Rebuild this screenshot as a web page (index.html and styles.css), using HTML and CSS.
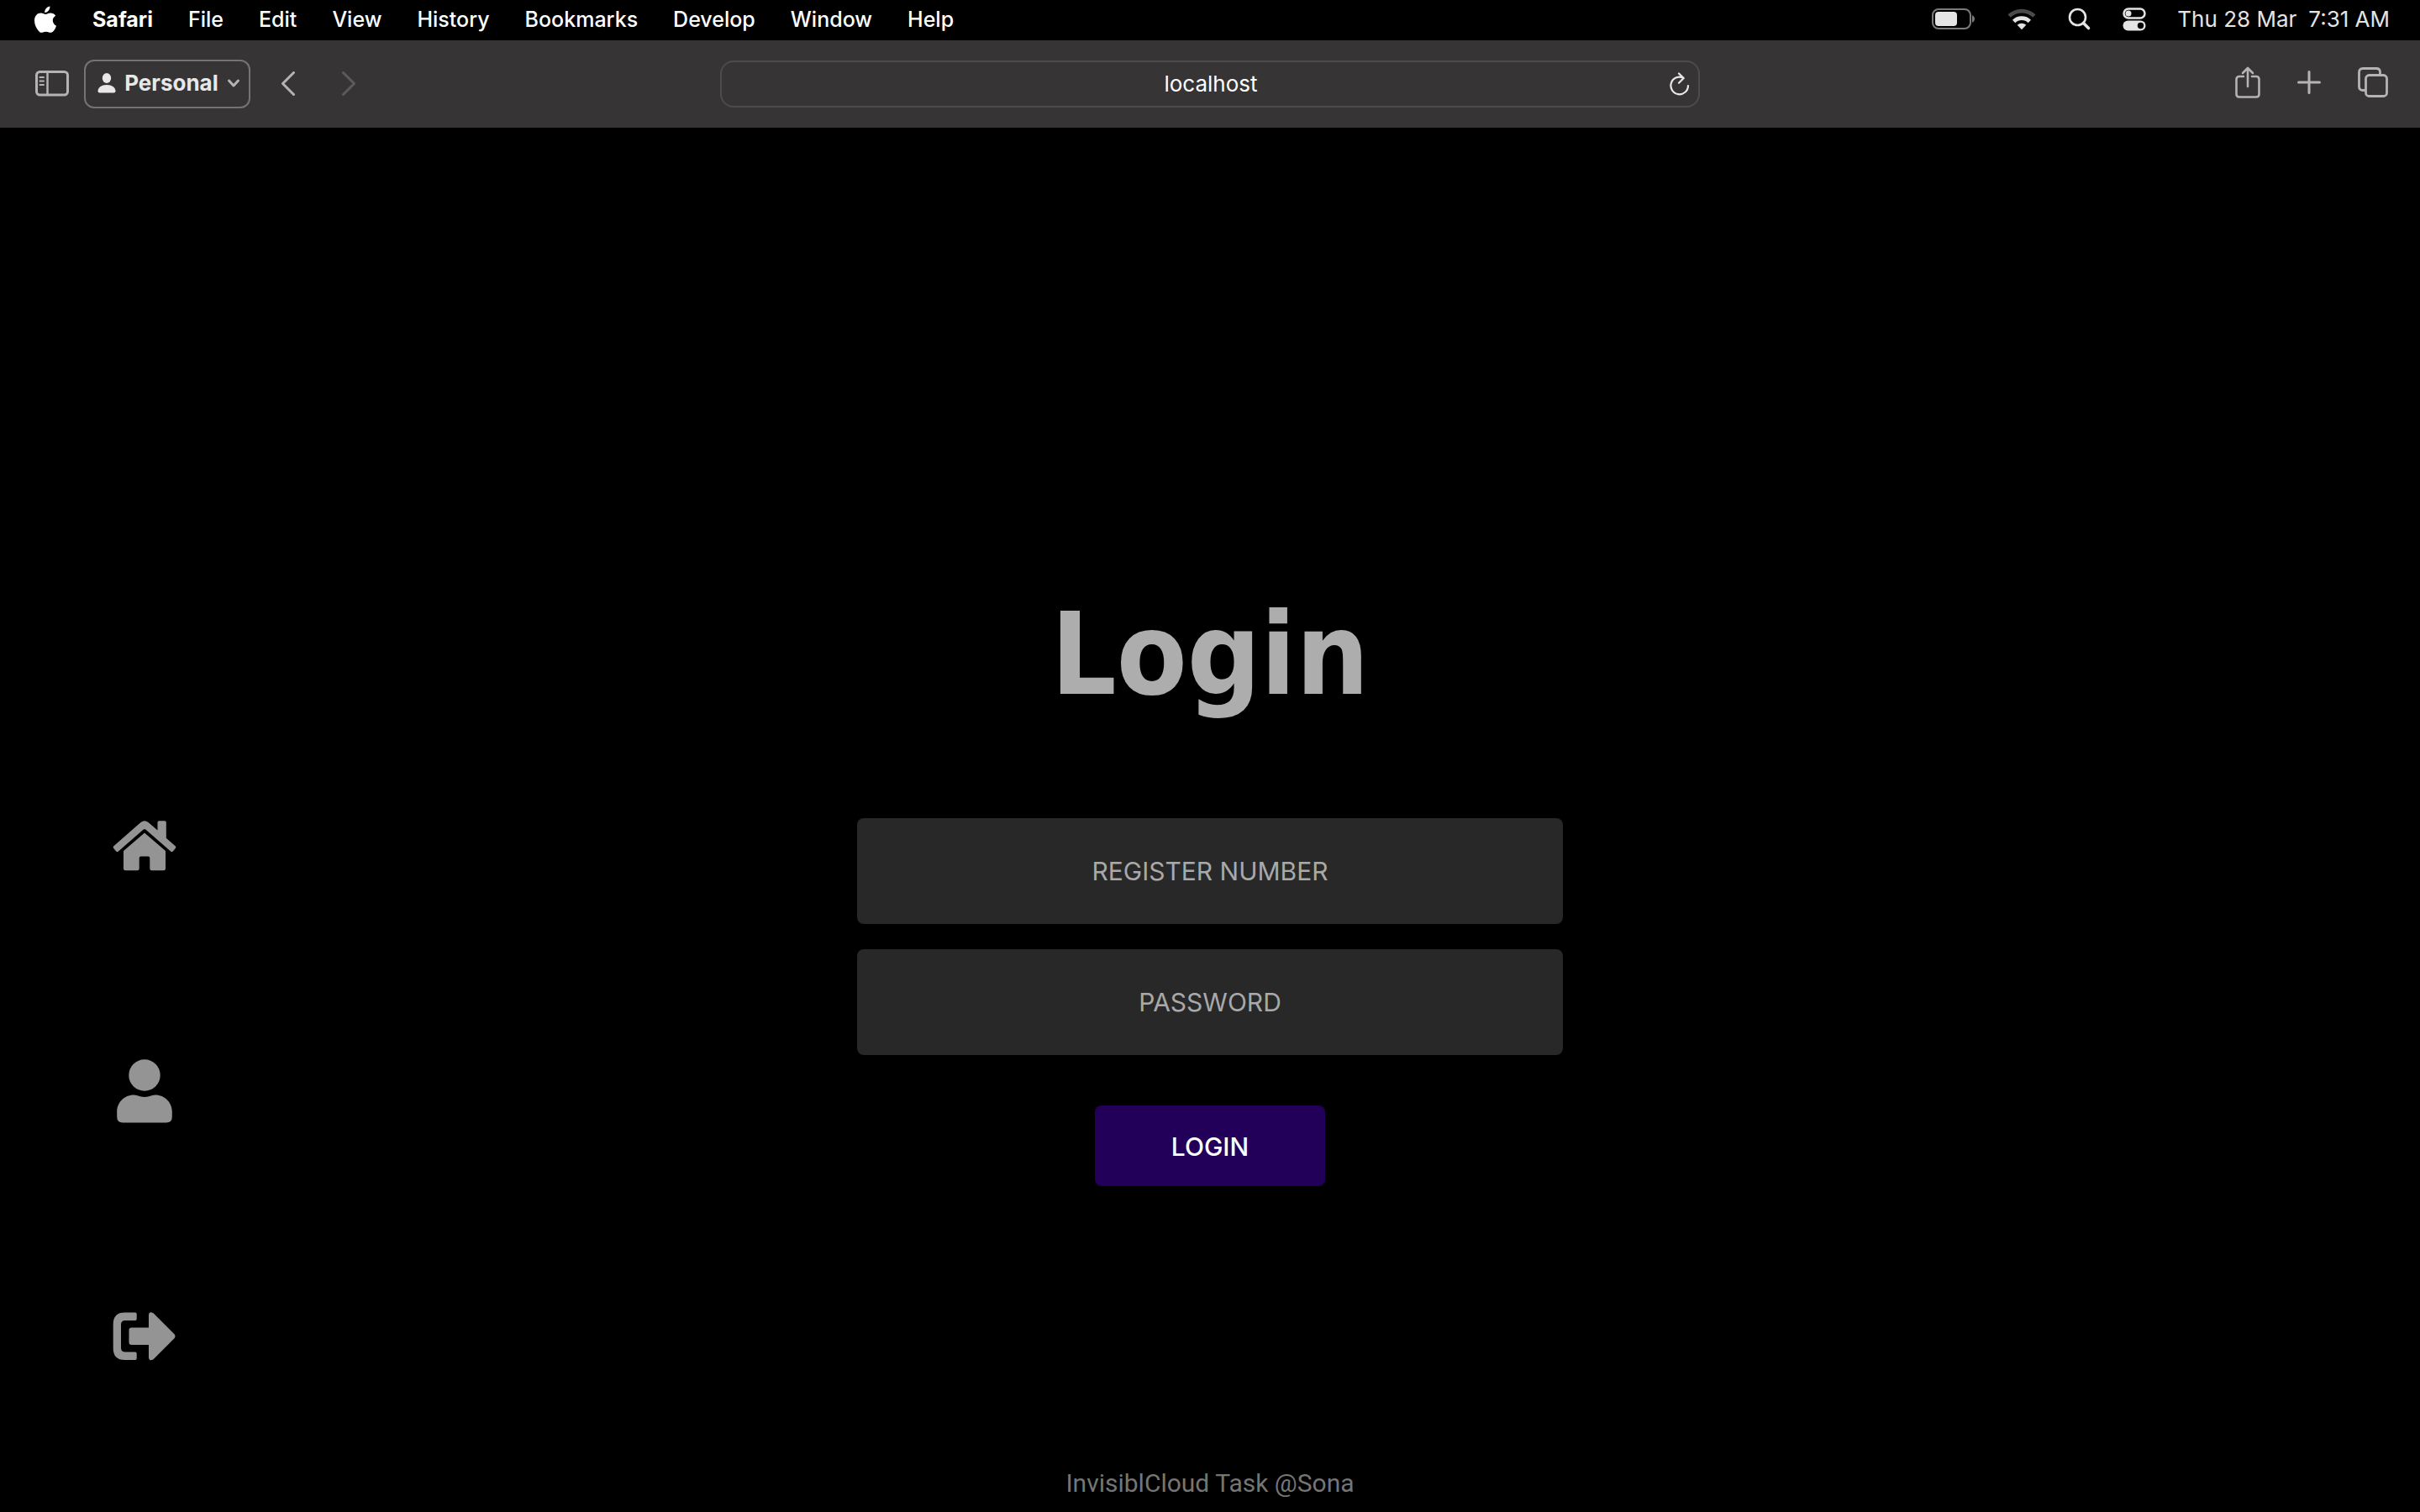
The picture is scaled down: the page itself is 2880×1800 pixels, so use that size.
FILE: index.html
```html
<!DOCTYPE html>
<html lang="en">
<head>
<meta charset="utf-8">
<meta name="viewport" content="width=device-width, initial-scale=1">
<title>Login</title>
<link rel="stylesheet" href="styles.css">
</head>
<body>
<header>
  <div class="menubar">
    <nav class="menus" aria-label="Menu bar">
      <button class="apple" aria-label="System menu">
        <svg width="28" height="32" viewBox="0 0 28 32" fill="currentColor"><path d="M19.4 0.6C19.6 2.8 18.7 4.7 17.5 6C16.3 7.300 14.600 8.100 13.200 8C13 6 14 4 15.200 2.800C16.300 1.600 18 0.700 19.400 0.600ZM14.300 10C15.800 10 17.500 8.600 20 8.600C22.500 8.600 24.900 9.800 26.200 11.800C23.900 13.200 22.700 15.100 22.800 17.600C22.900 20.600 24.700 22.700 27 23.700C26.400 25.800 25.200 28 23.800 29.700C22.700 31 21.600 31.800 20 31.800C18.200 31.800 17.100 30.700 14.600 30.700C12.100 30.700 11.100 31.800 9.300 31.800C7.900 31.800 6.700 30.800 5.400 29.200C2.800 26 1 21.800 1 17.600C1 12 4.500 8.600 8.600 8.600C11.100 8.600 12.900 10 14.300 10Z"/></svg>
      </button>
      <button class="app-name">Safari</button>
      <button>File</button>
      <button>Edit</button>
      <button>View</button>
      <button>History</button>
      <button>Bookmarks</button>
      <button>Develop</button>
      <button>Window</button>
      <button>Help</button>
    </nav>
    <div class="status">
      <svg width="52" height="26" viewBox="0 0 52 26"><rect x="1" y="1" width="45" height="23" rx="7" fill="none" stroke="#7b7b7b" stroke-width="2"/><rect x="4" y="4" width="26" height="17" rx="4" fill="#e4e4e4"/><path d="M48 8C52 10 52 15 48 17Z" fill="#7b7b7b"/></svg>
      <svg width="36" height="26" viewBox="0 0 36 26"><path d="M1.500 9.500A23.500 23.500 0 0 1 34.500 9.500L31.200 12.800A19 19 0 0 0 4.800 12.800Z" transform="translate(0 -2)" fill="#4a4a4a"/><path d="M7 13.800A15.700 15.700 0 0 1 29 13.800L25.700 17.200A11 11 0 0 0 10.300 17.200Z" fill="#e4e4e4"/><path d="M12.700 19.800A7.700 7.700 0 0 1 23.300 19.800L18 25.200Z" fill="#e4e4e4"/></svg>
      <svg width="28" height="28" viewBox="0 0 28 28" fill="none" stroke="#e4e4e4"><circle cx="11.500" cy="11.500" r="9.500" stroke-width="2.600"/><path d="M18.500 18.500L24.500 24.500" stroke-width="3.600" stroke-linecap="round"/></svg>
      <svg width="28" height="28" viewBox="0 0 28 28"><rect x="1.500" y="1.500" width="25" height="11" rx="5.500" fill="none" stroke="#e4e4e4" stroke-width="2.500"/><circle cx="7" cy="7" r="3.500" fill="#e4e4e4"/><rect x="0.500" y="15.500" width="27" height="12" rx="6" fill="#e4e4e4"/><circle cx="21.500" cy="21.500" r="3.700" fill="#000"/></svg>
      <time class="clock"><span>Thu 28 Mar</span><span>7:31 AM</span></time>
    </div>
  </div>

  <div class="toolbar">
    <div class="tools">
      <button aria-label="Show sidebar">
        <svg width="40" height="32" viewBox="0 0 40 32" fill="none" stroke="currentColor"><rect x="1.500" y="1.500" width="37" height="27.500" rx="4" stroke-width="3"/><path d="M14.500 2V29" stroke-width="2.500"/><path d="M5.500 8H10M5.500 12.500H10M5.500 17H10" stroke-width="2" stroke-linecap="round"/></svg>
      </button>
      <button class="profile">
        <svg width="22" height="24" viewBox="0 0 22 24" fill="currentColor"><ellipse cx="11" cy="6" rx="5.200" ry="6"/><path d="M0.500 21.500C0.500 17 5 14 11 14S21.500 17 21.500 21.500Q21.500 23.500 19.500 23.500H2.500Q0.500 23.500 0.500 21.500Z"/></svg>
        <span>Personal</span>
        <svg class="dim" width="16" height="12" viewBox="0 0 16 12" fill="none" stroke="currentColor" stroke-width="3" stroke-linecap="round" stroke-linejoin="round"><path d="M2.500 3L8 9L13.500 3"/></svg>
      </button>
      <button class="back" aria-label="Back">
        <svg width="18" height="30" viewBox="0 0 18 30" fill="none" stroke="currentColor" stroke-width="3" stroke-linecap="round" stroke-linejoin="round"><path d="M15.500 1.500L2.500 14.500L15.500 27.500"/></svg>
      </button>
      <button class="forward" aria-label="Forward" disabled>
        <svg width="18" height="30" viewBox="0 0 18 30" fill="none" stroke="currentColor" stroke-width="3" stroke-linecap="round" stroke-linejoin="round"><path d="M2.500 1.500L15.500 14.500L2.500 27.500"/></svg>
      </button>
    </div>
    <div class="address">
      <input type="text" value="localhost" aria-label="Address">
      <button aria-label="Reload">
        <svg width="24" height="28" viewBox="0 0 24 28" fill="none" stroke="currentColor" stroke-width="2.200" stroke-linecap="round" stroke-linejoin="round"><path d="M22 16A10.300 10.300 0 1 1 16 6.600M11 1.500L16.700 7L11 12.700"/></svg>
      </button>
    </div>
    <div class="actions">
      <button aria-label="Share">
        <svg width="30" height="38" viewBox="0 0 30 38" fill="none" stroke="currentColor" stroke-width="2.600" stroke-linecap="round" stroke-linejoin="round"><path d="M10 12H5Q1.500 12 1.500 15.500V33Q1.500 36.500 5 36.500H25Q28.500 36.500 28.500 33V15.500Q28.500 12 25 12H20M15 24V2M9 8L15 2L21 8"/></svg>
      </button>
      <button aria-label="New tab">
        <svg width="28" height="28" viewBox="0 0 28 28" fill="none" stroke="currentColor" stroke-width="3" stroke-linecap="round"><path d="M14 1.500V26.500M1.500 14H26.500"/></svg>
      </button>
      <button aria-label="Tab overview">
        <svg width="36" height="36" viewBox="0 0 36 36" fill="none" stroke="currentColor" stroke-width="2.800"><rect x="9.500" y="9.500" width="25" height="25" rx="4"/><path d="M9 27.500H6Q1.500 27.500 1.500 23V6Q1.500 1.500 6 1.500H22Q26.500 1.500 26.500 6V9"/></svg>
      </button>
    </div>
  </div>
</header>

<main>
  <nav class="side" aria-label="Pages">
    <a href="#home" aria-label="Home">
      <svg width="76" height="76" viewBox="0 0 76 76" fill="currentColor"><path d="M1.300 38.200L33.500 10Q38 6.500 42.500 10L53.500 19.600V10Q53.500 8.200 55.300 8.200H62Q63.800 8.200 63.800 10V28.700L74.700 38.200Q76 39.500 74.900 40.800L71.800 44.400Q70.500 45.700 69.100 44.500L39.300 18.500Q38 17.500 36.700 18.500L6.900 44.500Q5.500 45.700 4.200 44.400L1.100 40.800Q0 39.500 1.300 38.200Z"/><path d="M38 22.500L63 44V65Q63 67.200 60.800 67.200H46.500Q44.300 67.200 44.300 65V52.500Q44.300 50.500 42.300 50.500H33.700Q31.700 50.500 31.700 52.500V65Q31.700 67.200 29.500 67.200H15.200Q13 67.200 13 65V44Z"/></svg>
    </a>
    <a href="#profile" aria-label="Profile">
      <svg width="76" height="76" viewBox="0 0 76 76" fill="currentColor"><circle cx="38" cy="19" r="18.700"/><path d="M25 42.500Q28 42.500 29.500 43.300Q38 46.700 46.500 43.300Q48 42.500 51 42.500C62 42.500 70.800 51.500 70.800 62.500V68.500Q70.800 75.500 63.800 75.500H12.200Q5.200 75.500 5.200 68.500V62.500C5.200 51.500 14 42.500 25 42.500Z"/></svg>
    </a>
    <a href="#logout" aria-label="Log out">
      <svg width="76" height="76" viewBox="0 0 76 76" fill="currentColor"><path d="M27 9.500Q28.700 9.500 28.700 11.200V17.300Q28.700 19 27 19H15Q10 19 10 24V51.500Q10 56.500 15 56.500H27Q28.700 56.500 28.700 58.200V64.300Q28.700 66 27 66H14.500Q0.700 66 0.700 52.200V23.300Q0.700 9.500 14.500 9.500Z"/><path d="M48.500 10.300L73.500 35.300Q75.500 37.700 73.500 40.200L48.500 65.200Q43 68 43 62.500V48H22.500Q19.500 48 19.500 45V30.500Q19.500 27.500 22.500 27.500H43V13Q43 7.500 48.500 10.300Z"/></svg>
    </a>
  </nav>
  <form class="login">
    <h1>Login</h1>
    <input type="text" placeholder="REGISTER NUMBER" aria-label="Register number">
    <input type="password" placeholder="PASSWORD" aria-label="Password">
    <button type="submit">LOGIN</button>
  </form>
</main>
<footer>InvisiblCloud Task @Sona</footer>
</body>
</html>
```
FILE: styles.css
```css
* {
  box-sizing: border-box;
}

body {
  margin: 0;
  min-height: 100vh;
  display: flex;
  flex-direction: column;
  background: #000;
  color: #fff;
  font: 26px/32px Inter, "Liberation Sans", sans-serif;
}

button,
input {
  margin: 0;
  padding: 0;
  border: 0;
  background: none;
  color: inherit;
  font: inherit;
}

svg {
  display: block;
}

/* system menu bar */
.menubar {
  display: flex;
  justify-content: space-between;
  align-items: center;
  height: 48px;
  padding: 0 36px 2px 40px;
}

.menus {
  display: flex;
  align-items: center;
  gap: 42px;
  font-size: 25px;
  font-weight: 500;
}

.menus .app-name {
  font-weight: 700;
}

.status {
  display: flex;
  align-items: center;
  gap: 37px;
  color: #e4e4e4;
}

.clock {
  display: flex;
  gap: 14px;
}

/* browser toolbar */
.toolbar {
  display: grid;
  grid-template-columns: 1fr minmax(0, 1166px) 1fr;
  align-items: center;
  height: 104px;
  padding: 0 38px;
  background: #363435;
  color: #b5b3b4;
}

.tools,
.actions {
  display: flex;
  align-items: center;
}

.tools {
  padding-left: 4px;
}

.profile {
  display: flex;
  align-items: center;
  justify-content: space-between;
  width: 198px;
  height: 58px;
  margin: 0 36px 0 18px;
  padding: 0 10px 2px 14px;
  border: 2px solid #757374;
  border-radius: 12px;
  color: #e8e8e8;
  font-weight: 700;
}

.dim {
  color: #b5b3b4;
}

.forward {
  margin-left: 54px;
  color: #5c5a5b;
}

.address {
  display: flex;
  align-items: center;
  height: 56px;
  padding: 0 10px 0 36px;
  border: 2px solid #4d4b4c;
  border-radius: 16px;
  color: #fff;
}

.address input {
  flex: 1;
  min-width: 0;
  text-align: center;
}

.address button {
  color: #e8e8e8;
}

.actions {
  justify-content: flex-end;
  gap: 44px;
  padding-bottom: 4px;
}

/* login page */
main {
  flex: 1;
  display: grid;
  grid-template-columns: 1fr minmax(0, 840px) 1fr;
  align-items: start;
}

.side {
  display: flex;
  flex-direction: column;
  align-items: flex-start;
  gap: 216px;
  padding: 817px 0 0 134px;
}

.side a {
  color: #949494;
}

.login {
  display: flex;
  flex-direction: column;
  align-items: center;
  gap: 30px;
  padding-top: 527px;
}

.login h1 {
  margin: 0 0 65px;
  color: #adadad;
  font: 700 136px/200px "DejaVu Sans Condensed", "DejaVu Sans", sans-serif;
  font-stretch: condensed;
}

.login input {
  width: 100%;
  height: 126px;
  border-radius: 8px;
  background: #282828;
  font-size: 30px;
  text-align: center;
}

.login input::placeholder {
  color: #a9a9a9;
  opacity: 1;
}

.login button {
  height: 96px;
  margin-top: 30px;
  padding: 2px 91px 0;
  border-radius: 8px;
  background: #22005a;
  font-size: 30px;
  font-weight: 500;
}

footer {
  padding-bottom: 14px;
  color: #757575;
  font: 30px/40px Roboto, sans-serif;
  text-align: center;
}
```
